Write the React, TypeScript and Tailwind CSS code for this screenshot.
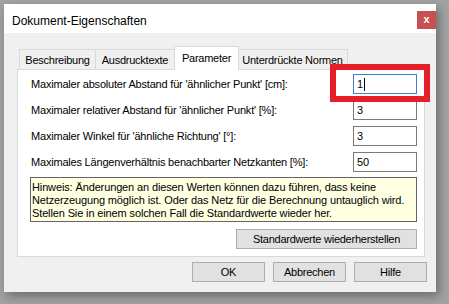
import React from "react";

const font = { fontFamily: '"Liberation Sans", Arial, sans-serif' };

function Tab({ label, active, w }: { label: string; active?: boolean; w: string }) {
  if (active) {
    return (
      <div
        className={`${w} h-[24px] -mb-[1px] -mx-[1px] relative z-10 bg-white border border-[#d9d9d9] border-b-0 flex items-start justify-center pt-[3px] text-[11px] tracking-[-0.25px] text-black`}
      >
        {label}
      </div>
    );
  }
  return (
    <div
      className={`${w} h-[20px] bg-[#f0f0f0] border border-[#d9d9d9] border-b-0 -ml-[1px] first:ml-0 flex items-center justify-center pt-[2px] text-[11px] tracking-[-0.25px] text-black`}
    >
      {label}
    </div>
  );
}

function Row({ label, value, focused }: { label: string; value: string; focused?: boolean }) {
  return (
    <div className="h-[20px] flex items-center justify-between">
      <span className="whitespace-nowrap text-[11px] tracking-[-0.2px] text-black pl-[1px]">{label}</span>
      <div
        className={`w-[64px] h-[20px] bg-white border ${
          focused ? "border-[#3c84c8]" : "border-[#7a7a7a]"
        } flex items-center pl-[3px] text-[11px] text-black`}
      >
        {value}
        {focused && <span className="inline-block w-[1px] h-[13px] bg-black ml-[1px]" />}
      </div>
    </div>
  );
}

function Btn({ children, w }: { children: React.ReactNode; w: string }) {
  return (
    <div
      className={`${w} h-[20px] bg-[#e1e1e1] border border-[#adadad] flex items-center justify-center text-[11px] tracking-[-0.25px] text-black`}
    >
      {children}
    </div>
  );
}

export default function App() {
  return (
    <div
      className="w-[449px] h-[304px] bg-[#a3a3a3] pt-[4px] pl-[4px] relative overflow-hidden"
      style={font}
    >
      <div className="w-[432px] h-[288px] bg-[#f0f0f0] flex flex-col shadow-[3px_4px_10px_rgba(0,0,0,0.35)]">
        {/* title bar */}
        <div className="h-[29px] bg-white flex items-start justify-between pl-[8px]">
          <span className="text-[12px] text-black mt-[10px] leading-[14px]">Dokument-Eigenschaften</span>
          <div className="w-[19px] h-[18px] mt-[7px] bg-[#c75050] flex items-center justify-center text-white text-[11px] font-bold leading-none pb-[2px]">
            x
          </div>
        </div>

        {/* tabs */}
        <div className="pl-[13px] pr-[11px] pt-[13px] flex flex-col">
          <div className="flex items-end pl-[2px] h-[23px]">
            <Tab label="Beschreibung" w="w-[77px]" />
            <Tab label="Ausdrucktexte" w="w-[80px]" />
            <Tab label="Parameter" active w="w-[65px]" />
            <Tab label="Unterdrückte Normen" w="w-[111px]" />
          </div>
          <div className="h-[188px] bg-white border border-[#d9d9d9] pl-[12px] pr-[7px] pt-[4px] flex flex-col">
            <div className="flex flex-col gap-[6px]">
              <Row label="Maximaler absoluter Abstand für 'ähnlicher Punkt' [cm]:" value="1" focused />
              <Row label="Maximaler relativer Abstand für 'ähnlicher Punkt' [%]:" value="3" />
              <Row label="Maximaler Winkel für 'ähnliche Richtung' [°]:" value="3" />
              <Row label="Maximales Längenverhältnis benachbarter Netzkanten [%]:" value="50" />
            </div>
            <div className="mt-[5px] h-[45px] bg-[#ffffe1] border border-[#646464] px-[1px] pt-[3px] text-[11px] leading-[13px] tracking-[-0.13px] text-black">
              Hinweis: Änderungen an diesen Werten können dazu führen, dass keine
              <br />
              Netzerzeugung möglich ist. Oder das Netz für die Berechnung untauglich wird.
              <br />
              Stellen Sie in einem solchen Fall die Standardwerte wieder her.
            </div>
            <div className="mt-[7px] flex justify-end">
              <Btn w="w-[181px]">Standardwerte wiederherstellen</Btn>
            </div>
          </div>
        </div>

        {/* bottom buttons */}
        <div className="flex justify-end gap-[8px] pr-[9px] mt-[5px]">
          <Btn w="w-[73px]">OK</Btn>
          <Btn w="w-[73px]">Abbrechen</Btn>
          <Btn w="w-[73px]">Hilfe</Btn>
        </div>
      </div>

      {/* red highlight annotation */}
      <div className="absolute left-[330px] top-[64px] w-[100px] h-[38px] border-[6px] border-[#e61e28]" />
    </div>
  );
}
